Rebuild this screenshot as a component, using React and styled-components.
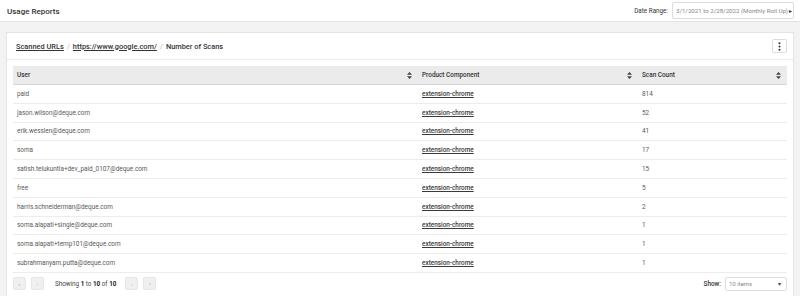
import React from 'react'
import styled, { createGlobalStyle } from 'styled-components'

const GlobalStyle = createGlobalStyle`
  body {
    margin: 0;
    background: #f3f3f3;
    font-family: Roboto, "Liberation Sans", sans-serif;
    color: #333;
  }
`

const rows = [
  ['paid', 814],
  ['jason.wilson@deque.com', 52],
  ['erik.wesslen@deque.com', 41],
  ['soma', 17],
  ['satish.telukuntla+dev_paid_0107@deque.com', 15],
  ['free', 5],
  ['harris.schneiderman@deque.com', 2],
  ['soma.alapati+single@deque.com', 1],
  ['soma.alapati+temp101@deque.com', 1],
  ['subrahmanyam.putta@deque.com', 1],
]

function SortIcon() {
  return (
    <svg width="5" height="7" viewBox="0 0 5 7">
      <path d="M2.5 0 L5 2.8 L0 2.8 Z M2.5 7 L5 4.2 L0 4.2 Z" fill="#444" />
    </svg>
  )
}

export default function App() {
  return (
    <>
      <GlobalStyle />
      <TopBar>
        <PageTitle>Usage Reports</PageTitle>
        <DateRange>
          <Label>Date Range:</Label>
          <DateSelect>
            3/1/2021 to 2/28/2022 (Monthly Roll Up)
            <Caret>▸</Caret>
          </DateSelect>
        </DateRange>
      </TopBar>
      <Content>
        <Card>
          <CardHeader>
            <Breadcrumb>
              <Crumb>Scanned URLs</Crumb>
              <Sep>/</Sep>
              <Crumb>https://www.google.com/</Crumb>
              <Sep>/</Sep>
              <span>Number of Scans</span>
            </Breadcrumb>
            <MenuButton>
              <svg width="3" height="9" viewBox="0 0 3 9">
                <circle cx="1.5" cy="1.2" r="1" fill="#333" />
                <circle cx="1.5" cy="4.5" r="1" fill="#333" />
                <circle cx="1.5" cy="7.8" r="1" fill="#333" />
              </svg>
            </MenuButton>
          </CardHeader>
          <TableWrap>
            <Table>
              <colgroup>
                <col style={{ width: 405 }} />
                <col style={{ width: 220 }} />
                <col />
              </colgroup>
              <thead>
                <tr>
                  <Th>
                    <ThInner>User<SortIcon /></ThInner>
                  </Th>
                  <Th>
                    <ThInner>Product Component<SortIcon /></ThInner>
                  </Th>
                  <Th>
                    <ThInner>Scan Count<SortIcon /></ThInner>
                  </Th>
                </tr>
              </thead>
              <tbody>
                {rows.map(([user, count], i) => (
                  <tr key={i}>
                    <Td>{user}</Td>
                    <Td>
                      <ComponentLink>extension-chrome</ComponentLink>
                    </Td>
                    <Td>{count}</Td>
                  </tr>
                ))}
              </tbody>
            </Table>
            <Pager>
              <PagerLeft>
                <PageButton>«</PageButton>
                <PageButton>‹</PageButton>
                <Showing>
                  Showing <b>1</b> to <b>10</b> of <b>10</b>
                </Showing>
                <PageButton>›</PageButton>
                <PageButton>»</PageButton>
              </PagerLeft>
              <ShowBox>
                <ShowLabel>Show:</ShowLabel>
                <ItemsSelect>
                  10 items
                  <SmallCaret>▾</SmallCaret>
                </ItemsSelect>
              </ShowBox>
            </Pager>
          </TableWrap>
        </Card>
      </Content>
    </>
  )
}

const TopBar = styled.div`
  height: 22px;
  background: #fff;
  border-bottom: 1px solid #e3e3e3;
  display: flex;
  align-items: center;
  justify-content: space-between;
  padding: 0 7px 0 7px;
  box-sizing: border-box;
`

const PageTitle = styled.div`
  font-size: 8px;
  font-weight: 500;
  color: #333;
  margin-top: 1px;
`

const DateRange = styled.div`
  display: flex;
  align-items: center;
  gap: 4px;
  margin-right: -1px;
`

const Label = styled.span`
  font-size: 6.3px;
  color: #333;
`

const DateSelect = styled.div`
  height: 17px;
  display: flex;
  align-items: center;
  gap: 1px;
  padding: 0 1px 0 3px;
  border: 1px solid #dcdcdc;
  border-radius: 2px;
  font-size: 6.15px;
  color: #888;
  box-sizing: border-box;
`

const Caret = styled.span`
  font-size: 6px;
  color: #333;
`

const Content = styled.div`
  padding: 10px 6px 0 6px;
`

const Card = styled.div`
  background: #fff;
  border: 1px solid #e4e4e4;
  min-height: 280px;
`

const CardHeader = styled.div`
  height: 26px;
  display: flex;
  align-items: center;
  justify-content: space-between;
  padding: 0 6px 0 9px;
  border-bottom: 1px solid #ececec;
`

const Breadcrumb = styled.div`
  display: flex;
  align-items: center;
  gap: 3px;
  font-size: 7.4px;
  font-weight: 500;
  color: #333;
`

const Crumb = styled.span`
  text-decoration: underline;
`

const Sep = styled.span`
  color: #bbb;
  font-weight: 400;
`

const MenuButton = styled.div`
  width: 15px;
  height: 14px;
  border: 1px solid #dcdcdc;
  border-radius: 2px;
  display: flex;
  align-items: center;
  justify-content: center;
  box-sizing: border-box;
`

const TableWrap = styled.div`
  padding: 6px 6px 0 6px;
`

const Table = styled.table`
  width: 100%;
  border-collapse: collapse;
  table-layout: fixed;
`

const Th = styled.th`
  height: 18px;
  background: #ebebeb;
  border-bottom: 1px solid #d6d6d6;
  text-align: left;
  font-size: 6.4px;
  font-weight: 500;
  color: #333;
  padding: 0 6px 0 4px;
`

const ThInner = styled.div`
  display: flex;
  align-items: center;
  justify-content: space-between;
`

const Td = styled.td`
  height: 18.8px;
  box-sizing: border-box;
  border-bottom: 1px solid #ececec;
  font-size: 6.4px;
  color: #5a5a5a;
  padding: 0 4px;
`

const ComponentLink = styled.span`
  color: #3a3a3a;
  font-weight: 500;
  text-decoration: underline;
`

const Pager = styled.div`
  display: flex;
  align-items: center;
  justify-content: space-between;
  padding-top: 4px;
`

const PagerLeft = styled.div`
  display: flex;
  align-items: center;
  gap: 5px;
`

const PageButton = styled.div`
  width: 13px;
  height: 13px;
  background: #f0f0f0;
  border: 1px solid #e6e6e6;
  border-radius: 2px;
  display: flex;
  align-items: center;
  justify-content: center;
  font-size: 6px;
  color: #c4c4c4;
  box-sizing: border-box;
`

const Showing = styled.span`
  font-size: 6.3px;
  color: #444;
  margin: 0 4px 0 6px;

  b {
    font-weight: 700;
    color: #222;
  }
`

const ShowBox = styled.div`
  display: flex;
  align-items: center;
  gap: 4px;
`

const ShowLabel = styled.span`
  font-size: 6.4px;
  font-weight: 500;
  color: #333;
`

const ItemsSelect = styled.div`
  width: 62px;
  height: 14px;
  border: 1px solid #dcdcdc;
  border-radius: 2px;
  display: flex;
  align-items: center;
  justify-content: space-between;
  padding: 0 5px 0 3px;
  font-size: 6px;
  color: #888;
  box-sizing: border-box;
`

const SmallCaret = styled.span`
  font-size: 6px;
  color: #444;
`
